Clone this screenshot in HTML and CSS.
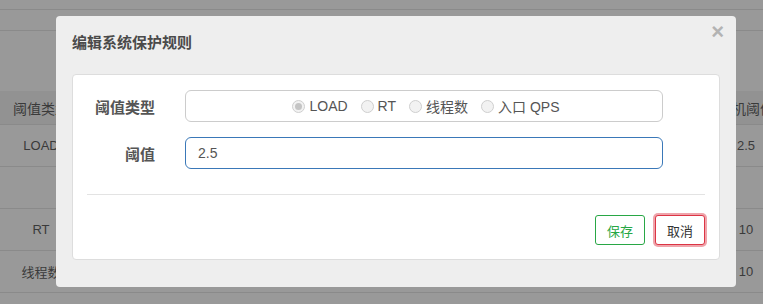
FILE: index.html
```html
<!DOCTYPE html>
<html>
<head>
    <title>系统保护规则</title>
    <link rel="stylesheet" href="styles.css">
</head>
<body>
    <div class="page">
        <div class="topbar"></div>
        <div class="tabbar"></div>
        <div class="spacer"></div>
        <div class="row head">
            <div class="cell first">阈值类型</div>
            <div class="cell"></div>
            <div class="cell last">单机阈值</div>
        </div>
        <div class="row">
            <div class="cell first">LOAD</div>
            <div class="cell"></div>
            <div class="cell last">2.5</div>
        </div>
        <div class="row">
            <div class="cell first"></div>
            <div class="cell"></div>
            <div class="cell last"></div>
        </div>
        <div class="row">
            <div class="cell first">RT</div>
            <div class="cell"></div>
            <div class="cell last">10</div>
        </div>
        <div class="row">
            <div class="cell first">线程数</div>
            <div class="cell"></div>
            <div class="cell last">10</div>
        </div>
    </div>

    <div class="modal">
        <div class="modal-header">
            <h4 class="modal-title">编辑系统保护规则</h4>
            <span class="close">&times;</span>
        </div>
        <div class="panel">
            <div class="form-row">
                <label class="form-label">阈值类型</label>
                <div class="radio-box">
                    <span class="radio"><i class="dot checked"></i>LOAD</span>
                    <span class="radio"><i class="dot"></i>RT</span>
                    <span class="radio"><i class="dot"></i>线程数</span>
                    <span class="radio"><i class="dot"></i>入口 QPS</span>
                </div>
            </div>
            <div class="form-row">
                <label class="form-label">阈值</label>
                <input class="text-input" type="text" value="2.5">
            </div>
            <div class="divider"></div>
            <div class="actions">
                <button type="button" class="btn btn-save">保存</button>
                <button type="button" class="btn btn-cancel">取消</button>
            </div>
        </div>
    </div>
</body>
</html>
```

FILE: styles.css
```css
html, body {
    margin: 0;
    padding: 0;
    overflow: hidden;
}
body {
    font-family: "Liberation Sans", "Noto Sans CJK SC", sans-serif;
    background-color: #999999;
    width: 763px;
    height: 304px;
    position: relative;
}
.page {
    width: 778px;
}
.topbar {
    height: 9px;
    border-bottom: 1px solid #8a8a8a;
}
.tabbar {
    height: 20px;
    border-bottom: 1px solid #8a8a8a;
}
.spacer {
    height: 60px;
}
.row {
    display: flex;
    height: 41px;
    border-bottom: 1px solid #8a8a8a;
    color: #3a3a3a;
    font-size: 13px;
}
.row.head {
    height: 33px;
    background-color: #929292;
    font-size: 14px;
}
.cell {
    flex: 1;
    display: flex;
    align-items: center;
    justify-content: center;
}
.cell.first {
    flex: 0 0 82px;
}
.cell.last {
    flex: 0 0 64px;
}

.modal {
    position: absolute;
    left: 56px;
    top: 16px;
    width: 680px;
    height: 271px;
    box-sizing: border-box;
    background-color: #eeeeee;
    border-radius: 4px;
    padding: 0 16px;
}
.modal-header {
    display: flex;
    justify-content: space-between;
    height: 58px;
}
.modal-title {
    margin: 0;
    padding-top: 17px;
    font-size: 15px;
    line-height: 20px;
    font-weight: bold;
    color: #4a4a4a;
}
.close {
    margin: 5px -4px 0 0;
    font-size: 22px;
    line-height: 22px;
    font-weight: bold;
    color: #b3b3b3;
}
.panel {
    background-color: #fff;
    border: 1px solid #dddddd;
    border-radius: 4px;
    height: 186px;
    box-sizing: border-box;
    padding-top: 15px;
}
.form-row {
    display: flex;
    align-items: center;
    height: 32px;
    margin-bottom: 15px;
}
.form-label {
    width: 82px;
    text-align: right;
    font-size: 15px;
    font-weight: bold;
    color: #555;
    margin-right: 30px;
}
.radio-box, .text-input {
    width: 478px;
    height: 32px;
    box-sizing: border-box;
    border: 1px solid #cccccc;
    border-radius: 6px;
}
.radio-box {
    display: flex;
    justify-content: center;
    align-items: center;
    gap: 13px;
    padding-left: 4px;
    font-size: 14px;
    color: #555;
}
.radio {
    display: flex;
    align-items: center;
}
.dot {
    display: inline-block;
    width: 13px;
    height: 13px;
    box-sizing: border-box;
    border: 1px solid #cfcfcf;
    border-radius: 50%;
    background-color: #f2f2f2;
    margin-right: 4px;
    position: relative;
}
.dot.checked::after {
    content: "";
    position: absolute;
    left: 2px;
    top: 2px;
    width: 7px;
    height: 7px;
    border-radius: 50%;
    background-color: #c4c4c4;
}
.text-input {
    border-color: #3a78b8;
    padding: 0 12px;
    font-family: "Liberation Sans", sans-serif;
    font-size: 14px;
    color: #555;
    outline: none;
}
.divider {
    height: 1px;
    background-color: #e3e3e3;
    margin: 25px 14px 0;
}
.actions {
    display: flex;
    justify-content: flex-end;
    gap: 10px;
    margin: 20px 14px 0;
}
.btn {
    width: 50px;
    height: 30px;
    box-sizing: border-box;
    background-color: #fff;
    border: 1px solid #28a745;
    border-radius: 3px;
    font-family: "Liberation Sans", "Noto Sans CJK SC", sans-serif;
    font-size: 13px;
    padding: 0;
    cursor: pointer;
}
.btn-save {
    color: #28a745;
}
.btn-cancel {
    border-color: #dc3545;
    color: #333;
    box-shadow: 0 0 0 2px rgba(220, 53, 69, 0.45);
}
```
